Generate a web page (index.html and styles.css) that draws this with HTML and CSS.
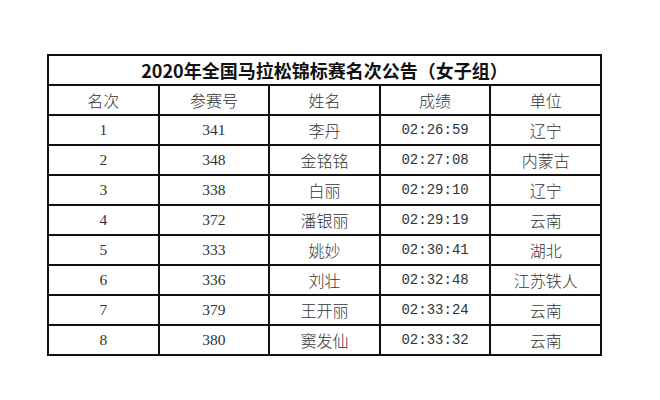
FILE: index.html
```html
<!DOCTYPE html>
<html lang="zh-CN">
<head>
<meta charset="utf-8">
<title>2020年全国马拉松锦标赛名次公告（女子组）</title>
<link rel="stylesheet" href="styles.css">
</head>
<body>
<div class="page">
<table class="results">
  <tr class="title-row"><th colspan="5" class="title">2020年全国马拉松锦标赛名次公告（女子组）</th></tr>
  <tr class="head-row"><td>名次</td><td>参赛号</td><td>姓名</td><td>成绩</td><td>单位</td></tr>
  <tr><td class="num">1</td><td class="num">341</td><td>李丹</td><td class="time">02:26:59</td><td>辽宁</td></tr>
  <tr><td class="num">2</td><td class="num">348</td><td>金铭铭</td><td class="time">02:27:08</td><td>内蒙古</td></tr>
  <tr><td class="num">3</td><td class="num">338</td><td>白丽</td><td class="time">02:29:10</td><td>辽宁</td></tr>
  <tr><td class="num">4</td><td class="num">372</td><td>潘银丽</td><td class="time">02:29:19</td><td>云南</td></tr>
  <tr><td class="num">5</td><td class="num">333</td><td>姚妙</td><td class="time">02:30:41</td><td>湖北</td></tr>
  <tr><td class="num">6</td><td class="num">336</td><td>刘壮</td><td class="time">02:32:48</td><td>江苏铁人</td></tr>
  <tr><td class="num">7</td><td class="num">379</td><td>王开丽</td><td class="time">02:33:24</td><td>云南</td></tr>
  <tr><td class="num">8</td><td class="num">380</td><td>窦发仙</td><td class="time">02:33:32</td><td>云南</td></tr>
</table>
</div>
</body>
</html>
```

FILE: styles.css
```css
html, body {
  margin: 0;
  padding: 0;
  background: #ffffff;
}
.page {
  padding: 54px 0 0 47px;
}
.results {
  border-collapse: collapse;
  width: 555px;
  table-layout: fixed;
  color: #333333;
  font-family: "Liberation Serif", "Noto Sans CJK SC", serif;
  font-size: 15px;
}
.results td, .results th {
  border: 2px solid #111111;
  text-align: center;
  vertical-align: middle;
  padding: 0;
  height: 28px;
  line-height: 20px;
}
.results tr {
  height: 30px;
}
.title {
  font-family: "Noto Sans CJK SC", sans-serif;
  font-weight: 700;
  font-size: 18px;
  color: #111111;
}
.results td {
  font-family: "Noto Sans CJK SC", sans-serif;
  font-weight: 300;
  font-size: 16px;
}
.head-row td {
  font-size: 16px;
}
.results td.num {
  font-family: "Liberation Serif", serif;
  font-weight: 400;
  font-size: 15.5px;
}
.results td.time {
  font-family: "Liberation Mono", monospace;
  font-weight: 400;
  font-size: 14px;
}
```
